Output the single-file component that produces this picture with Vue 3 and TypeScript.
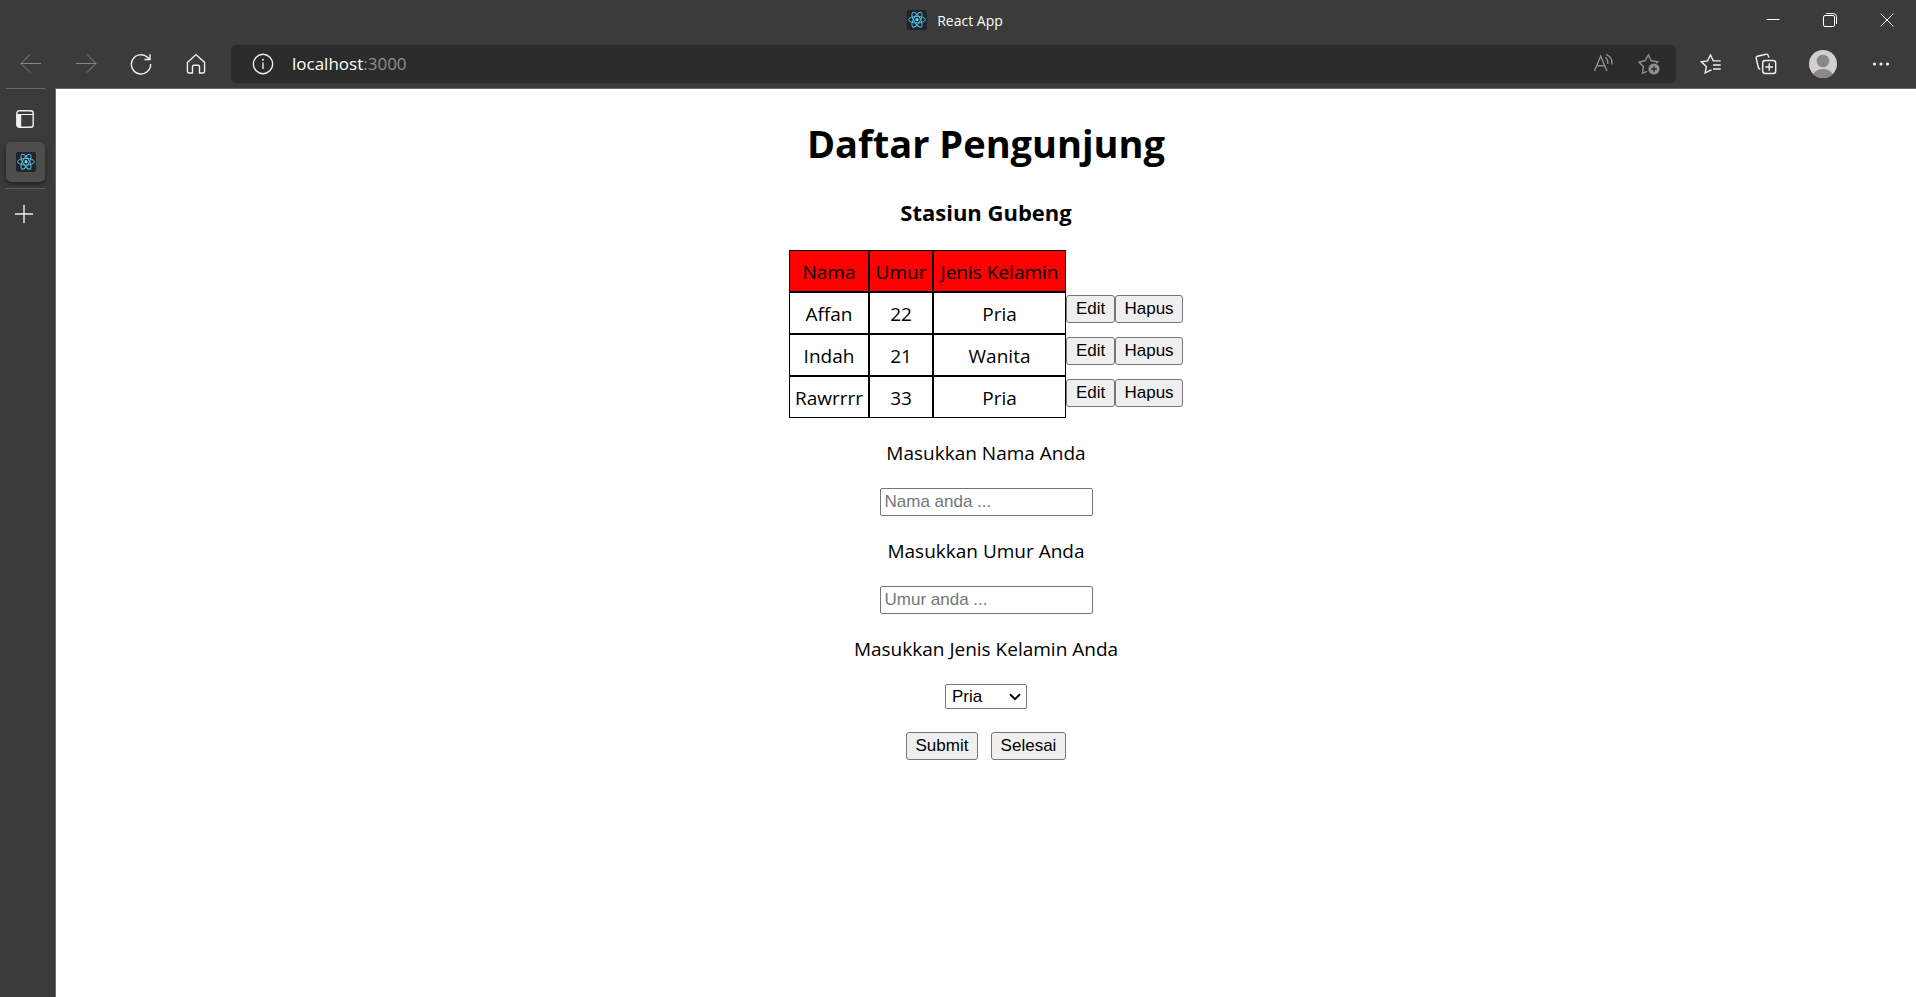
<script setup lang="ts">
import { reactive, ref } from 'vue'

interface Visitor {
  nama: string
  umur: string
  kelamin: string
}

const visitors = ref<Visitor[]>([
  { nama: 'Affan', umur: '22', kelamin: 'Pria' },
  { nama: 'Indah', umur: '21', kelamin: 'Wanita' },
  { nama: 'Rawrrrr', umur: '33', kelamin: 'Pria' },
])

const form = reactive<Visitor>({ nama: '', umur: '', kelamin: 'Pria' })
const editing = ref<number | null>(null)

function reset() {
  form.nama = ''
  form.umur = ''
  form.kelamin = 'Pria'
  editing.value = null
}

function edit(index: number) {
  Object.assign(form, visitors.value[index])
  editing.value = index
}

function remove(index: number) {
  visitors.value.splice(index, 1)
}

function submit() {
  if (!form.nama || !form.umur) return
  if (editing.value === null) visitors.value.push({ ...form })
  else visitors.value[editing.value] = { ...form }
  reset()
}
</script>

<template>
  <div class="browser">
    <svg width="0" height="0" class="defs" aria-hidden="true">
      <symbol id="react-logo" viewBox="0 0 20 20">
        <rect width="20" height="20" rx="2" fill="#20232a" />
        <g fill="none" stroke="#53bcd8" stroke-width="1">
          <ellipse cx="10" cy="9.7" rx="8.4" ry="3.3" />
          <ellipse cx="10" cy="9.7" rx="8.4" ry="3.3" transform="rotate(60 10 9.7)" />
          <ellipse cx="10" cy="9.7" rx="8.4" ry="3.3" transform="rotate(120 10 9.7)" />
        </g>
        <circle cx="10" cy="9.7" r="1.6" fill="#61dafb" />
      </symbol>
    </svg>

    <header class="titlebar">
      <div class="title">
        <svg width="20" height="20"><use href="#react-logo" /></svg>
        <span>React App</span>
      </div>
      <div class="window-controls">
        <button type="button" aria-label="Minimize">
          <svg width="14" height="14" viewBox="0 0 14 14"><path d="M.5 6.500h13" /></svg>
        </button>
        <button type="button" aria-label="Restore">
          <svg width="14" height="14" viewBox="0 0 14 14">
            <rect x=".5" y="2.5" width="11" height="11" rx="1.5" />
            <path d="M3 .6h7.5a3 3 0 0 1 3 3V11" />
          </svg>
        </button>
        <button type="button" aria-label="Close">
          <svg width="14" height="14" viewBox="0 0 14 14"><path d="M.7.7l12.6 12.6M13.3.7L.7 13.3" /></svg>
        </button>
      </div>
    </header>

    <nav class="toolbar">
      <button type="button" class="tool dim" aria-label="Back">
        <svg width="22" height="22" viewBox="0 0 22 22"><path d="M21 10.500H1M10 1.500l-9 9 9 9" /></svg>
      </button>
      <button type="button" class="tool dim" aria-label="Forward">
        <svg width="22" height="22" viewBox="0 0 22 22"><path d="M1 10.500h20M12 1.500l9 9-9 9" /></svg>
      </button>
      <button type="button" class="tool" aria-label="Refresh">
        <svg width="22" height="22" viewBox="0 0 22 22">
          <path class="bold" d="M20.6 11A9.6 9.6 0 1 1 17.5 4.3L20 6.5M20 1.3v5.2h-5.5" />
        </svg>
      </button>
      <button type="button" class="tool" aria-label="Home">
        <svg width="22" height="22" viewBox="0 0 22 22">
          <path class="bold" d="M2.4 9.4 11 1.6l8.6 7.8v9.2a1.4 1.4 0 0 1-1.4 1.4h-3.7v-6.3a1.4 1.4 0 0 0-1.4-1.4H8.9a1.4 1.4 0 0 0-1.4 1.4V20H3.8a1.4 1.4 0 0 1-1.4-1.4z" />
        </svg>
      </button>

      <div class="address">
        <button type="button" class="site-info" aria-label="Site information">
          <svg width="22" height="22" viewBox="0 0 22 22">
            <circle cx="11" cy="11" r="9.7" class="bold" />
            <path d="M11 9.5V16" class="bold" />
            <circle cx="11" cy="6.8" r="1" class="fill" />
          </svg>
        </button>
        <span class="url">localhost<span class="port">:3000</span></span>
        <button type="button" class="address-tool" aria-label="Read aloud">
          <svg width="22" height="22" viewBox="0 0 22 22">
            <path d="M1.5 18 7.7 3 13.900 18M3.700 12.700h8" class="bold" />
            <path d="M12.300 4.200a7 7 0 0 1 2.400 6.600M13 1.300a10 10 0 0 1 6 10.200" class="bold" />
          </svg>
        </button>
        <button type="button" class="address-tool" aria-label="Add to favorites">
          <svg width="22" height="22" viewBox="0 0 22 22">
            <path d="M9 18.300 4.500 20.200l.9-6.500L1 9l6-1.200L10.300 2l3 5.800 6.500 1-1.500 1.500" class="bold" />
            <circle cx="16" cy="16" r="5.600" class="fill" />
            <path d="M13.200 16h5.600M16 13.200v5.600" class="cut" />
          </svg>
        </button>
      </div>

      <button type="button" class="tool" aria-label="Favorites">
        <svg width="22" height="22" viewBox="0 0 22 22">
          <path class="bold" d="M10.500 17.200 5.200 20l1.100-6.500L1.300 8.800l6.200-.9L10.500 2l2.800 5.900h7.400M13 12h7.700M13 16h7.700M9.500 17.800l2-1" />
        </svg>
      </button>
      <button type="button" class="tool" aria-label="Collections">
        <svg width="22" height="22" viewBox="0 0 22 22">
          <path class="bold" d="M5.300 16.500 3.500 15 1.200 5.500A1.800 1.800 0 0 1 2.500 3.200L11 1.200a1.800 1.800 0 0 1 2.200 1.300l.6 2" />
          <rect class="bold" x="7.700" y="7.500" width="13" height="13" rx="2.500" />
          <path class="bold" d="M14.200 10.200v7.600M10.400 14h7.600" />
        </svg>
      </button>
      <button type="button" class="tool profile" aria-label="Profile">
        <svg width="28" height="28" viewBox="0 0 28 28">
          <clipPath id="avatar"><circle cx="14" cy="14" r="14" /></clipPath>
          <g clip-path="url(#avatar)">
            <rect width="28" height="28" class="avatar-bg" />
            <circle cx="14" cy="11" r="6.300" class="avatar-fg" />
            <ellipse cx="14" cy="26" rx="10" ry="7" class="avatar-fg" />
          </g>
        </svg>
      </button>
      <button type="button" class="tool" aria-label="Settings and more">
        <svg width="18" height="22" viewBox="0 0 18 22">
          <g class="fill">
            <circle cx="2.500" cy="11" r="1.600" />
            <circle cx="9" cy="11" r="1.600" />
            <circle cx="15.500" cy="11" r="1.600" />
          </g>
        </svg>
      </button>
    </nav>

    <div class="body">
      <aside class="tabs">
        <button type="button" class="tab-tool" aria-label="Tab actions">
          <svg width="18" height="18" viewBox="0 0 18 18">
            <rect x=".8" y=".8" width="16.400" height="16.400" rx="2.500" class="bold" />
            <path d="M1 4.500h16" />
            <path d="M.8 4.500h4.400v12.700H3a2.200 2.200 0 0 1-2.200-2.200z" class="fill" />
          </svg>
        </button>
        <button type="button" class="tab" aria-label="React App">
          <svg width="20" height="20"><use href="#react-logo" /></svg>
        </button>
        <button type="button" class="new-tab" aria-label="New tab">
          <svg width="18" height="18" viewBox="0 0 18 18"><path d="M0 9h18M9 0v18" class="bold" /></svg>
        </button>
      </aside>

      <main class="page">
        <h1>Daftar Pengunjung</h1>
        <h3>Stasiun Gubeng</h3>

        <table>
          <thead>
            <tr>
              <th>Nama</th>
              <th>Umur</th>
              <th>Jenis Kelamin</th>
            </tr>
          </thead>
          <tbody>
            <tr v-for="(visitor, index) in visitors" :key="index">
              <td>{{ visitor.nama }}</td>
              <td>{{ visitor.umur }}</td>
              <td>{{ visitor.kelamin }}</td>
              <td class="actions">
                <div class="action-row">
                  <button type="button" class="push edit" @click="edit(index)">Edit</button>
                  <button type="button" class="push hapus" @click="remove(index)">Hapus</button>
                </div>
              </td>
            </tr>
          </tbody>
        </table>

        <form @submit.prevent="submit">
          <label for="nama">Masukkan Nama Anda</label>
          <input id="nama" v-model="form.nama" type="text" placeholder="Nama anda ..." />
          <label for="umur">Masukkan Umur Anda</label>
          <input id="umur" v-model="form.umur" type="text" placeholder="Umur anda ..." />
          <label for="kelamin">Masukkan Jenis Kelamin Anda</label>
          <div class="select-box">
            <select id="kelamin" v-model="form.kelamin">
              <option>Pria</option>
              <option>Wanita</option>
            </select>
            <svg class="chevron" width="12" height="8" viewBox="0 0 12 8"><path d="M1 1.200l5 5 5-5" /></svg>
          </div>
          <div class="form-actions">
            <button type="submit" class="push submit">Submit</button>
            <button type="button" class="push selesai" @click="reset">Selesai</button>
          </div>
        </form>
      </main>
    </div>
  </div>
</template>

<style>
body {
  margin: 0;
}
</style>

<style scoped>
.browser {
  display: flex;
  flex-direction: column;
  min-height: 100vh;
  background: #3b3b3b;
  color: #fff;
  font-family: 'Open Sans', 'Noto Sans', sans-serif;
}

.browser *,
.browser *::before {
  box-sizing: border-box;
}

.defs {
  position: absolute;
}

button {
  font: inherit;
}

svg {
  display: block;
  fill: none;
  stroke: currentColor;
  stroke-width: 1;
}

.bold {
  stroke-width: 1.4;
}

.fill {
  fill: currentColor;
  stroke: none;
}

.titlebar {
  display: grid;
  grid-template-columns: 1fr auto 1fr;
  height: 40px;
}

.title {
  grid-column: 2;
  display: flex;
  align-items: center;
  gap: 10px;
  padding-right: 6px;
  font-size: 14px;
}

.title svg,
.tab svg {
  stroke: none;
}

.window-controls {
  display: flex;
  justify-content: flex-end;
  padding-right: 1px;
}

.window-controls button,
.tool,
.address button,
.tabs button {
  display: flex;
  align-items: center;
  justify-content: center;
  padding: 0;
  border: 0;
  background: none;
  color: #f0f0f0;
}

.window-controls button {
  width: 57px;
  color: #fff;
}

.toolbar {
  display: flex;
  align-items: center;
  height: 48px;
  padding: 0 8px 0 3px;
}

.tool {
  width: 55px;
  height: 38px;
}

.tool.dim {
  color: #858585;
}

.profile {
  width: 60px;
}

.profile svg {
  stroke: none;
}

.avatar-bg {
  fill: #d2d0ce;
}

.avatar-fg {
  fill: #8a8785;
}

.address {
  display: flex;
  flex: 1;
  align-items: center;
  height: 38px;
  margin: 0 7px 0 8px;
  padding: 0 5px 0 21px;
  border-radius: 5px;
  background: #2b2b2b;
}

.url {
  flex: 1;
  margin-left: 18px;
  padding-bottom: 2px;
  font-size: 17px;
}

.port {
  color: #8f8f8f;
}

.address .address-tool {
  width: 45px;
  color: #8f8f8f;
}

.cut {
  stroke: #2b2b2b;
  stroke-width: 1.4;
}

.body {
  display: flex;
  flex: 1;
}

.tabs {
  display: flex;
  flex-direction: column;
  width: 55px;
  padding: 0 10px 0 6px;
}

.tabs .tab-tool {
  height: 54px;
  padding: 6px 2px 0 0;
  border-top: 1px solid #6a6a6a;
}

.tabs .tab {
  height: 40px;
  border-radius: 5px;
  background: #4d4d4d;
  box-shadow: 0 2px 5px rgba(0, 0, 0, 0.5);
}

.tabs .new-tab {
  height: 50px;
  margin-top: 6px;
  padding-right: 3px;
  border-top: 1px solid #5c5c5c;
}

.page {
  display: flex;
  flex: 1;
  flex-direction: column;
  align-items: center;
  padding-top: 27px;
  border: solid #6a6a6a;
  border-width: 1px 0 0 1px;
  background: #fff;
  color: #000;
  font-size: 19px;
}

h1 {
  margin: 0 0 25px;
  font-size: 38px;
  line-height: 55px;
}

h3 {
  margin: 0 0 21px;
  font-size: 22px;
  line-height: 33px;
}

table {
  border-collapse: separate;
  border-spacing: 0;
  text-align: center;
  line-height: 26px;
}

th,
td {
  height: 42px;
  padding: 2px 5px 0;
  border: 1px solid #000;
  font-weight: 400;
}

th:nth-child(1) {
  min-width: 80px;
}

th:nth-child(2) {
  min-width: 64px;
}

th:nth-child(3) {
  min-width: 133px;
}

th {
  background: #f00;
}

td.actions {
  padding: 0;
  border: 0;
  vertical-align: top;
}

.action-row {
  display: flex;
  padding-top: 3px;
}

.push,
input,
select {
  border: 1px solid #767676;
  color: #000;
  font-family: 'Liberation Sans', Arial, sans-serif;
  font-size: 17px;
}

.push {
  height: 28px;
  padding: 0 0 1px;
  border-radius: 3px;
  background: #efefef;
  line-height: 20px;
}

.edit {
  width: 49px;
}

.hapus {
  width: 68px;
}

form {
  display: flex;
  flex-direction: column;
  align-items: center;
  padding-top: 20px;
}

label {
  margin-bottom: 19px;
  line-height: 31px;
}

input {
  width: 213px;
  height: 28px;
  margin-bottom: 20px;
  padding: 0 4px;
  border-radius: 2px;
}

input::placeholder {
  color: #757575;
}

.select-box {
  position: relative;
  margin-bottom: 23px;
}

select {
  display: block;
  width: 82px;
  height: 25px;
  padding: 0 6px 1px;
  border-radius: 2px;
  background-color: #fff;
  appearance: none;
}

.chevron {
  position: absolute;
  top: 9px;
  right: 6px;
  color: #000;
  stroke-width: 2;
  pointer-events: none;
}

.form-actions {
  display: flex;
  gap: 13px;
}

.submit {
  width: 72px;
}

.selesai {
  width: 75px;
}
</style>
